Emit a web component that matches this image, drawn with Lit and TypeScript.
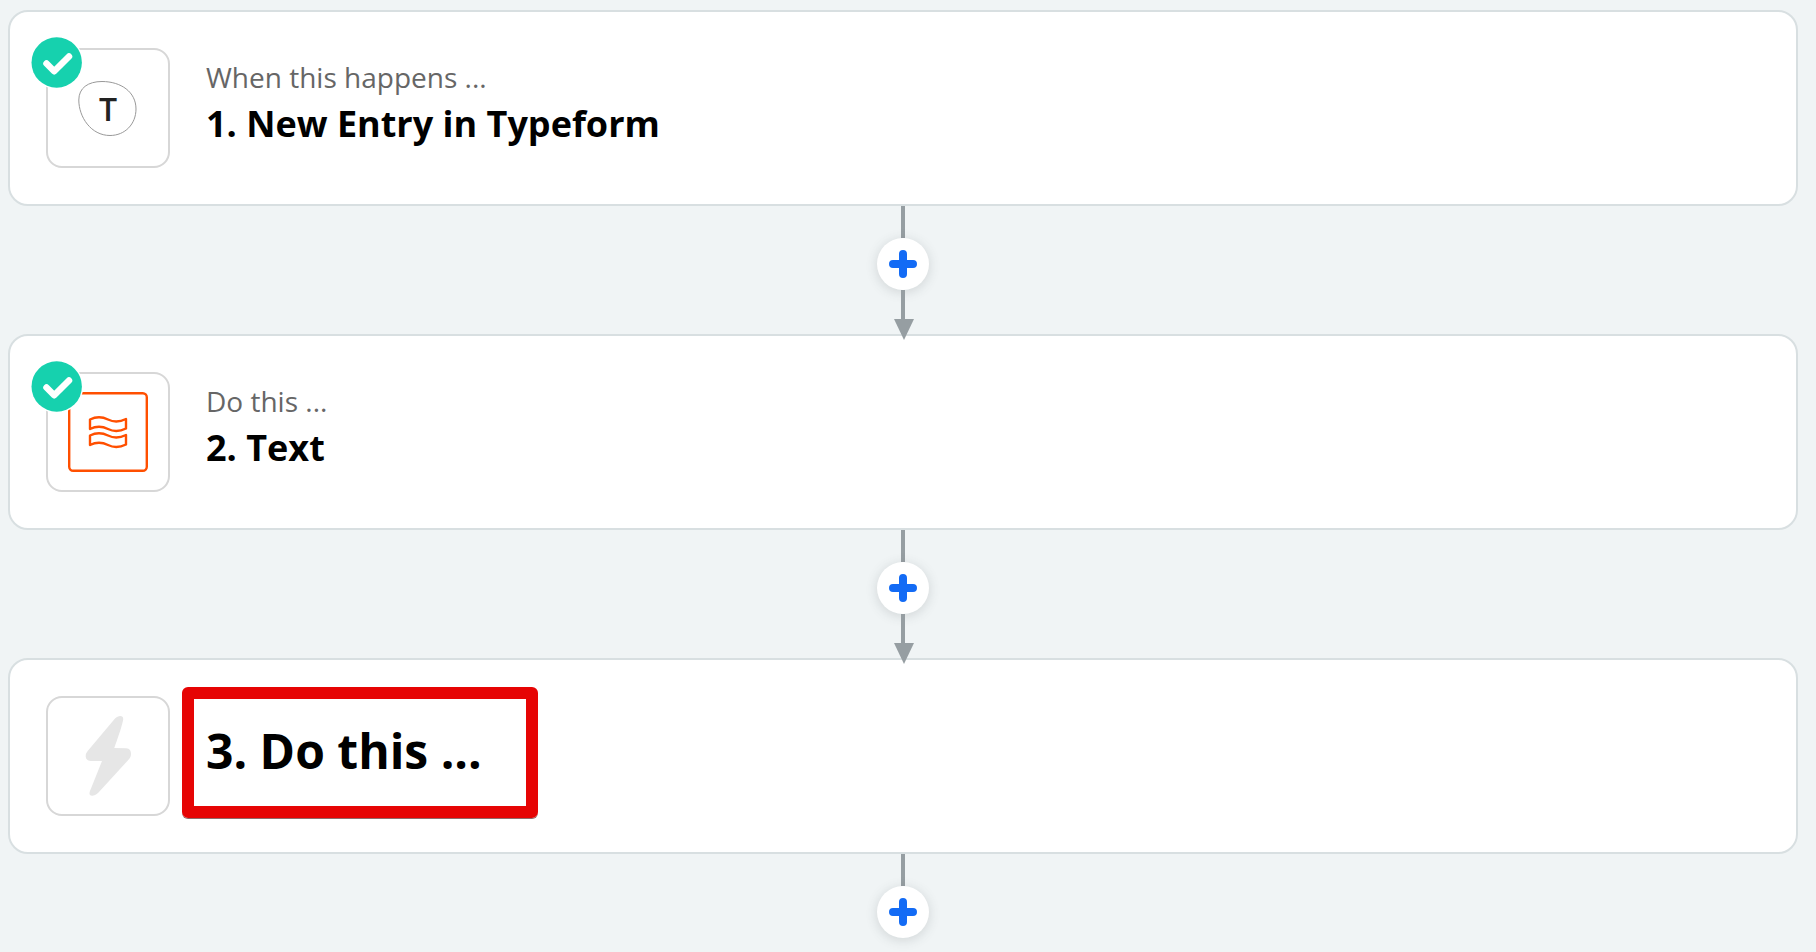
import { LitElement, html, svg, css, nothing } from "lit";
import { customElement, property } from "lit/decorators.js";

type IconName = "typeform" | "text" | "bolt";

interface Step {
  icon: IconName;
  hint?: string;
  title: string;
  done: boolean;
  marked?: boolean;
}

const STEPS: Step[] = [
  { icon: "typeform", hint: "When this happens ...", title: "1. New Entry in Typeform", done: true },
  { icon: "text", hint: "Do this ...", title: "2. Text", done: true },
  { icon: "bolt", title: "3. Do this ...", done: false, marked: true },
];

const ICONS = {
  typeform: svg`
    <path d="M10.800 32C10.800 20 20 13.500 34 13.500C53 13.500 68 24 68 41C68 56 57 67.500 42 67.500C23 67.500 10.800 49 10.800 32Z"
      fill="none" stroke="#999" stroke-width="1" />
    <text class="letter" x="40" y="52.500" text-anchor="middle">T</text>`,
  text: svg`
    <rect x="1.200" y="1.200" width="77.600" height="77.600" rx="4" fill="none" stroke="#ff4f00" stroke-width="2.400" />
    <g fill="none" stroke="#ff4f00" stroke-width="2.400" stroke-linejoin="round">
      <path d="M22 27.500C29 24 34 24.500 40 27.500C46 30.500 51 30.500 58 27V36.500C51 40 46 40 40 37C34 34 29 33.500 22 37Z" />
      <path d="M22 43.500C29 40 34 40.500 40 43.500C46 46.500 51 46.500 58 43V52.500C51 56 46 56 40 53C34 50 29 49.500 22 53Z" />
    </g>`,
  bolt: svg`
    <path fill="#e6e6e6" d="M47 2.500C50 -0.500 56.500 -1.500 55 4.500C53.500 12 49 24 46.300 32L58 32.200C62 32.400 63 35 63 38C63 40.500 62 42 60.500 43.700L30.500 76.500C27 80 23.500 80.500 22 79C20.800 77.500 22 75 23 72.500L34 45L23 45C19 44.800 17.700 42.500 17.700 40C17.700 38 18.500 36.500 19.700 35Z" />`,
};

@customElement("step-card")
export class StepCard extends LitElement {
  @property({ attribute: false }) step!: Step;

  static styles = css`
    :host {
      display: block;
    }
    .card {
      display: flex;
      align-items: center;
      gap: 36px;
      padding: 36px;
      background: #fff;
      border: 2px solid #d8dfe1;
      border-radius: 20px;
    }
    .tile {
      position: relative;
      box-sizing: border-box;
      display: flex;
      flex: none;
      align-items: center;
      justify-content: center;
      width: 124px;
      height: 120px;
      border: 2px solid #d7d7d7;
      border-radius: 16px;
    }
    .icon {
      display: block;
      width: 80px;
      height: 80px;
    }
    .letter {
      font: 600 32px "Open Sans", sans-serif;
      fill: #222;
    }
    .badge {
      position: absolute;
      top: -14px;
      left: -18px;
      width: 54px;
      height: 54px;
    }
    .copy {
      padding-bottom: 8px;
    }
    .hint {
      margin: 0;
      color: #666;
      font-size: 28px;
      line-height: 40px;
    }
    .title {
      position: relative;
      margin: 0;
      color: #000;
      font-size: 36px;
      font-weight: 700;
      line-height: 54px;
    }
    .title.large {
      padding-bottom: 2px;
      font-size: 48px;
      line-height: 64px;
    }
    .marker {
      position: absolute;
      top: -32px;
      left: -24px;
      box-sizing: border-box;
      width: 356px;
      height: 131px;
      border: 12px solid #e60404;
      border-radius: 6px;
      box-shadow: 0 1px 0 #8f6a6a;
      pointer-events: none;
    }
  `;

  render() {
    const { icon, hint, title, done, marked } = this.step;
    return html`
      <article class="card">
        <div class="tile">
          <svg class="icon" viewBox="0 0 80 80" aria-hidden="true">${ICONS[icon]}</svg>
          ${done
            ? html`<svg class="badge" viewBox="0 0 54 54" role="img" aria-label="Completed">
                <circle cx="26.700" cy="26.500" r="26.500" fill="#fff" />
                <circle cx="26.700" cy="26.500" r="25.200" fill="#16d1ae" />
                <path d="M16.500 27.500L24.200 35.200L39 20.500" fill="none" stroke="#fff" stroke-width="6.500"
                  stroke-linecap="round" stroke-linejoin="round" />
              </svg>`
            : nothing}
        </div>
        <div class="copy">
          ${hint ? html`<p class="hint">${hint}</p>` : nothing}
          <h2 class="title ${hint ? "" : "large"}">
            ${title}${marked ? html`<span class="marker"></span>` : nothing}
          </h2>
        </div>
      </article>
    `;
  }
}

@customElement("step-connector")
export class StepConnector extends LitElement {
  @property({ type: Boolean }) last = false;

  static styles = css`
    :host {
      display: block;
    }
    .connector {
      position: relative;
      display: flex;
      flex-direction: column;
      align-items: center;
    }
    .line {
      width: 4px;
      height: 32px;
      background: #969ea2;
    }
    .line.lower {
      height: 44px;
    }
    .add {
      display: flex;
      align-items: center;
      justify-content: center;
      width: 52px;
      height: 52px;
      padding: 0;
      border: 0;
      border-radius: 50%;
      background: #fff;
      box-shadow: 0 2px 12px rgba(60, 70, 75, 0.18);
      cursor: pointer;
    }
    .plus {
      display: block;
      width: 28px;
      height: 28px;
    }
    .arrow {
      position: absolute;
      bottom: -6px;
      width: 22px;
      height: 21px;
    }
  `;

  render() {
    return html`
      <div class="connector">
        <span class="line"></span>
        <button class="add" type="button" aria-label="Add a step">
          <svg class="plus" viewBox="0 0 28 28" aria-hidden="true">
            <path d="M14 4V24M4 14H24" fill="none" stroke="#136bf5" stroke-width="8" stroke-linecap="round" />
          </svg>
        </button>
        ${this.last
          ? nothing
          : html`<span class="line lower"></span>
              <svg class="arrow" viewBox="0 0 22 21" aria-hidden="true">
                <path d="M2 0H22L12 21Z" fill="#969ea2" />
              </svg>`}
      </div>
    `;
  }
}

@customElement("app-root")
export class AppRoot extends LitElement {
  static styles = css`
    :host {
      display: block;
      box-sizing: border-box;
      min-height: 100vh;
      padding: 10px 18px 10px 8px;
      background: #f0f4f5;
      font-family: "Open Sans", "Noto Sans", sans-serif;
    }
    .steps {
      margin: 0;
      padding: 0;
      list-style: none;
    }
    .connector {
      position: relative;
      z-index: 1;
    }
  `;

  render() {
    return html`
      <ol class="steps">
        ${STEPS.map(
          (step, i) => html`
            <li>
              <step-card .step=${step}></step-card>
              <step-connector class="connector" ?last=${i === STEPS.length - 1}></step-connector>
            </li>
          `,
        )}
      </ol>
    `;
  }
}
